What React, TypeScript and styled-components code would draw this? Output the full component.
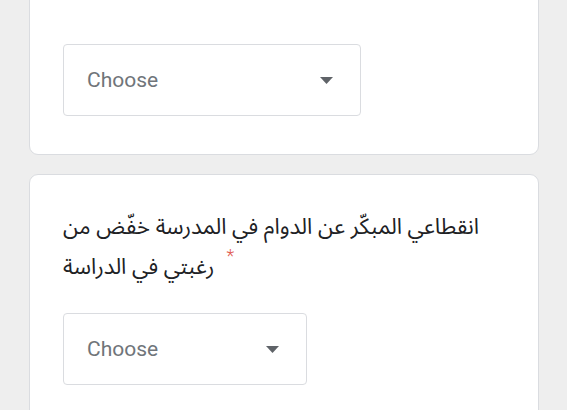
import React from 'react';
import styled, { createGlobalStyle } from 'styled-components';

const GlobalStyle = createGlobalStyle`
    html, body {
        margin: 0;
        padding: 0;
        background-color: #eeeeee;
        overflow: hidden;
    }
    body {
        font-family: Roboto, "Noto Sans", Arial, sans-serif;
    }
`;

const Page = styled.div`
    width: 567px;
    height: 410px;
    overflow: hidden;
    background-color: #eeeeee;
`;

const List = styled.div`
    display: flex;
    flex-direction: column;
    gap: 19px;
    margin: -56px 28px 0 29px;
`;

const Card = styled.div`
    background-color: #ffffff;
    border: 1px solid #dadce0;
    border-radius: 9px;
    padding: 33px 33px 38px;
    display: flex;
    flex-direction: column;
    gap: 21px;
`;

const Spacer = styled.div`
    height: 45px;
`;

const Question = styled.div`
    font-family: "Noto Sans Arabic", "Noto Sans Arabic UI", "DejaVu Sans", sans-serif;
    font-size: 22px;
    line-height: 39px;
    color: #202124;
    margin-bottom: 5px;
`;

const Required = styled.span`
    color: #e0584e;
    font-family: Roboto, Arial, sans-serif;
    font-size: 18px;
    font-weight: 300;
    vertical-align: 12px;
    line-height: 1;
    margin-left: 12px;
`;

const Select = styled.div<{ $width: number }>`
    width: ${(p) => p.$width}px;
    height: 72px;
    box-sizing: border-box;
    border: 1px solid #dadce0;
    border-radius: 4px;
    display: flex;
    align-items: center;
    justify-content: space-between;
    padding: 0 27px 0 23px;
`;

const Placeholder = styled.span`
    font-family: Roboto, Arial, sans-serif;
    font-size: 21px;
    color: #70757a;
`;

function Caret() {
    return (
        <svg width="13" height="7" viewBox="0 0 13 7">
            <polygon points="0,0 13,0 6.5,7" fill="#5f6368" />
        </svg>
    );
}

function Dropdown({ width }: { width: number }) {
    return (
        <Select $width={width}>
            <Placeholder>Choose</Placeholder>
            <Caret />
        </Select>
    );
}

export default function App() {
    return (
        <Page>
            <GlobalStyle />
            <List>
                <Card>
                    <Spacer />
                    <Dropdown width={298} />
                </Card>
                <Card>
                    <Question>
                        انقطاعي المبكّر عن الدوام في المدرسة خفّض من رغبتي في الدراسة
                        <Required>*</Required>
                    </Question>
                    <Dropdown width={244} />
                </Card>
            </List>
        </Page>
    );
}
